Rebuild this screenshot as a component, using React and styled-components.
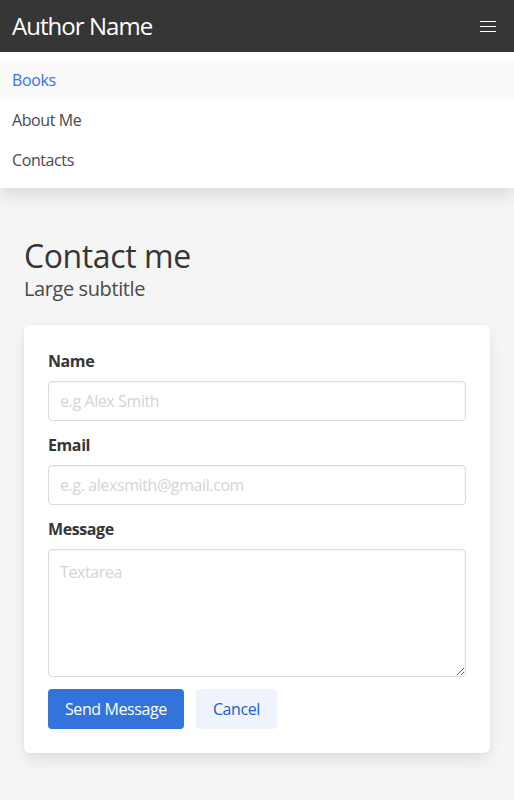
import React from 'react';
import styled, { createGlobalStyle } from 'styled-components';

const GlobalStyle = createGlobalStyle`
	html, body {
		margin: 0;
		padding: 0;
		background: #f5f5f5;
	}
	body {
		font-family: 'Open Sans', 'Noto Sans', sans-serif;
		font-size: 16px;
		line-height: 1.5;
		letter-spacing: -0.025em;
		color: #4a4a4a;
	}
	* {
		box-sizing: border-box;
	}
`;

const Navbar = styled.nav`
	height: 52px;
	background: #363636;
	display: flex;
	align-items: center;
	justify-content: space-between;
	padding: 0 0 0 12px;
`;

const Brand = styled.a`
	color: #fff;
	font-size: 24px;
	line-height: 1;
	letter-spacing: -0.04em;
	text-decoration: none;
`;

const Burger = styled.button`
	width: 52px;
	height: 52px;
	border: 0;
	padding: 0;
	background: transparent;
	display: flex;
	flex-direction: column;
	align-items: center;
	justify-content: center;
	gap: 4px;
	cursor: pointer;

	span {
		display: block;
		width: 16px;
		height: 1px;
		background: #fff;
	}
`;

const Menu = styled.div`
	background: #fff;
	padding: 8px 0;
	box-shadow: 0 8px 16px rgba(10, 10, 10, 0.1);
	position: relative;
`;

const MenuItem = styled.a`
	display: block;
	height: 40px;
	padding: 8px 12px;
	color: ${(p) => (p.$active ? '#3273dc' : '#4a4a4a')};
	background: ${(p) => (p.$active ? '#fafafa' : 'transparent')};
	text-decoration: none;
`;

const Section = styled.section`
	padding: 48px 24px;
`;

const Title = styled.h1`
	margin: 0 0 24px;
	padding-top: 2px;
	font-size: 32px;
	font-weight: 400;
	line-height: 1.125;
	color: #363636;
`;

const Subtitle = styled.h2`
	margin: -22px 0 24px;
	font-size: 20px;
	font-weight: 400;
	line-height: 1.25;
	color: #4a4a4a;
`;

const Card = styled.form`
	background: #fff;
	border-radius: 6px;
	padding: 24px;
	box-shadow: 0 0.5em 1em -0.125em rgba(10, 10, 10, 0.1), 0 0 0 1px rgba(10, 10, 10, 0.02);
	display: flex;
	flex-direction: column;
	gap: 12px;
`;

const Field = styled.div`
	display: flex;
	flex-direction: column;
	gap: 8px;
`;

const Label = styled.label`
	font-weight: 700;
	color: #363636;
`;

const Input = styled.input`
	height: 40px;
	width: 100%;
	padding: 7px 11px;
	border: 1px solid #dbdbdb;
	border-radius: 4px;
	box-shadow: inset 0 0.0625em 0.125em rgba(10, 10, 10, 0.05);
	font-family: inherit;
	letter-spacing: inherit;
	font-size: 16px;
	color: #363636;
	background: #fff;

	&::placeholder {
		color: #d4d4d4;
	}
`;

const TextArea = styled.textarea`
	display: block;
	width: 100%;
	height: 128px;
	padding: 10px 11px;
	border: 1px solid #dbdbdb;
	border-radius: 4px;
	box-shadow: inset 0 0.0625em 0.125em rgba(10, 10, 10, 0.05);
	font-family: inherit;
	letter-spacing: inherit;
	font-size: 16px;
	line-height: 1.5;
	color: #363636;
	resize: vertical;

	&::placeholder {
		color: #d4d4d4;
	}
`;

const Buttons = styled.div`
	display: flex;
	gap: 12px;
`;

const Button = styled.button`
	height: 40px;
	padding: 0 16px;
	border: 1px solid transparent;
	border-radius: 4px;
	font-family: inherit;
	letter-spacing: inherit;
	font-size: 16px;
	cursor: pointer;
	background: ${(p) => (p.$light ? '#eef3fc' : '#3273dc')};
	color: ${(p) => (p.$light ? '#2160c4' : '#fff')};
`;

export default function App() {
	return (
		<>
			<GlobalStyle />
			<Navbar>
				<Brand href="#">Author Name</Brand>
				<Burger type="button" aria-label="menu">
					<span />
					<span />
					<span />
				</Burger>
			</Navbar>
			<Menu>
				<MenuItem href="#" $active>Books</MenuItem>
				<MenuItem href="#">About Me</MenuItem>
				<MenuItem href="#">Contacts</MenuItem>
			</Menu>
			<Section>
				<Title>Contact me</Title>
				<Subtitle>Large subtitle</Subtitle>
				<Card onSubmit={(e) => e.preventDefault()}>
					<Field>
						<Label>Name</Label>
						<Input type="text" placeholder="e.g Alex Smith" />
					</Field>
					<Field>
						<Label>Email</Label>
						<Input type="email" placeholder="e.g. alexsmith@gmail.com" />
					</Field>
					<Field>
						<Label>Message</Label>
						<TextArea placeholder="Textarea" />
					</Field>
					<Buttons>
						<Button type="submit">Send Message</Button>
						<Button type="button" $light>Cancel</Button>
					</Buttons>
				</Card>
			</Section>
		</>
	);
}
